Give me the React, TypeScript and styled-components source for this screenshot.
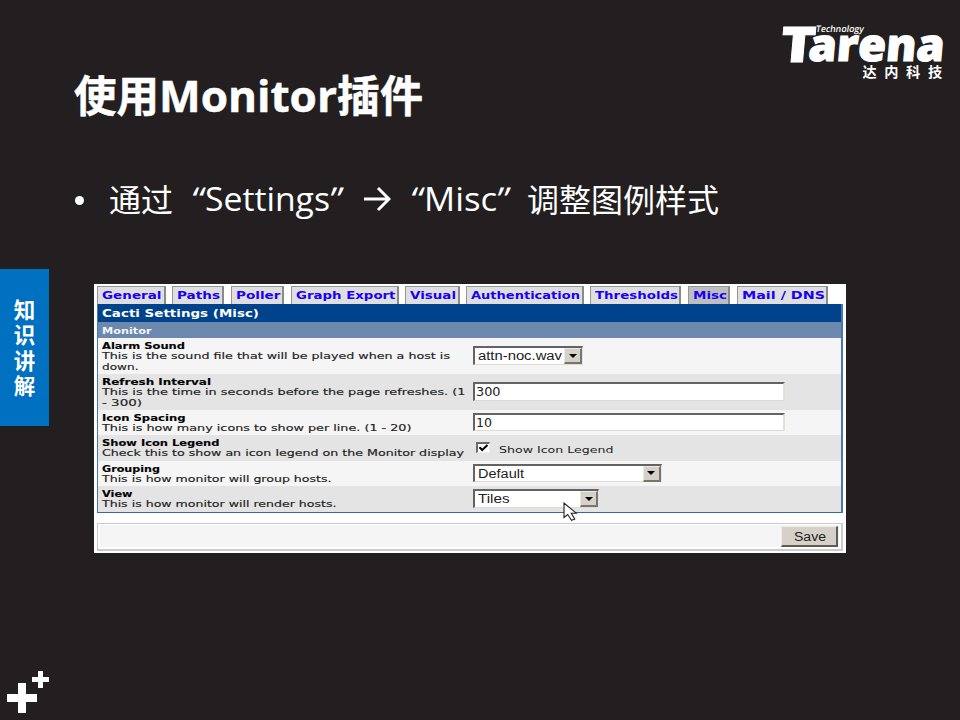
import React, { useLayoutEffect, useRef, useState } from "react";
import styled, { createGlobalStyle } from "styled-components";

const GlobalStyle = createGlobalStyle`
  body { margin: 0; background: #231f20; overflow: hidden; }
  *, *::before, *::after { box-sizing: border-box; }
`;

/* Text stretched horizontally to a given width */
const FitBox = styled.span<{ $w: number }>`
  display: block;
  flex: none;
  width: ${(p) => p.$w}px;
  white-space: pre;
`;
const FitInner = styled.span`
  display: inline-block;
  vertical-align: top;
  transform-origin: 0 0;
`;
function Fit({ w, children, className }: { w: number; children: React.ReactNode; className?: string }) {
  const ref = useRef<HTMLSpanElement>(null);
  const [scale, setScale] = useState(1);
  useLayoutEffect(() => {
    const el = ref.current;
    if (!el) return;
    const natural = parseFloat(getComputedStyle(el).width);
    el.style.transform = `scaleX(${w / natural})`;
    setScale(w / natural);
  }, [w, children]);
  return (
    <FitBox $w={w} className={className}>
      <FitInner ref={ref} style={{ transform: `scaleX(${scale})` }}>
        {children}
      </FitInner>
    </FitBox>
  );
}

const Slide = styled.div`
  display: grid;
  grid-template-columns: 49px 1fr;
  width: 960px;
  height: 720px;
  overflow: hidden;
  background: #231f20;
  color: #fff;
`;
const Rail = styled.aside`
  display: flex;
  flex-direction: column;
  justify-content: space-between;
  padding-top: 269px;
`;
const SideTab = styled.div`
  width: 49px;
  height: 157px;
  padding-top: 26.5px;
  background: #0070c0;
  font: 700 21.5px/25.5px "Noto Sans CJK SC", sans-serif;
  text-align: center;
  span { display: block; }
`;
const Plus = styled.svg`
  display: block;
  width: 49px;
  height: 60px;
`;
const Main = styled.main`
  display: flex;
  flex-direction: column;
`;
const Header = styled.header`
  display: flex;
  justify-content: space-between;
  height: 150px;
  padding: 0 16px 0 25px;
`;
const Title = styled.h1`
  display: flex;
  margin: 66px 0 0;
  height: 60px;
  font: 700 43.5px/60px "Open Sans", "Noto Sans CJK SC", sans-serif;
  -webkit-text-stroke: 0.5px #fff;
`;
const Logo = styled.div`
  position: relative;
  width: 163px;
  height: 84px;
`;
const LogoT = styled(Fit)`
  position: absolute;
  left: 0px;
  top: 24.5px;
  font: 800 49px/36px "Open Sans", sans-serif;
  transform: skewX(-5deg);
  -webkit-text-stroke: 0.8px #fff;
`;
const LogoRest = styled(Fit)`
  position: absolute;
  left: 28px;
  top: 31px;
  font: 800 45px/26px "Open Sans", sans-serif;
  transform: skewX(-5deg);
  -webkit-text-stroke: 1.2px #fff;
`;
const LogoTag = styled(Fit)`
  position: absolute;
  left: 35px;
  top: 24px;
  font: 600 9px/10px "Open Sans", sans-serif;
  transform: skewX(-9deg);
`;
const LogoName = styled.div`
  position: absolute;
  left: 81.5px;
  top: 63.5px;
  display: flex;
  gap: 7.6px;
  font: 700 14.2px/15px "Noto Sans CJK SC", sans-serif;
`;
const Bullet = styled.div`
  display: flex;
  align-items: center;
  height: 60px;
  margin-top: 19px;
  padding-left: 26px;
  font: 400 33px/60px "Open Sans", "Noto Sans CJK SC", sans-serif;
`;
const Dot = styled.i`
  width: 9px;
  height: 9px;
  margin: 2px 25px 0 0;
  border-radius: 50%;
  background: #fff;
`;
const Han = styled(Fit)`
  height: 60px;
  margin-top: -2px;
  font: 400 32px/60px "Noto Sans CJK SC", sans-serif;
`;
const Quote = styled(Fit)`
  transform: skewX(-6deg);
`;
const Gap = styled.i<{ $w: number }>`
  flex: none;
  width: ${(p) => p.$w}px;
`;
const Arrow = styled.svg`
  flex: none;
  width: 27px;
  height: 26px;
`;

const Panel = styled.section`
  width: 752px;
  height: 269px;
  margin: 55px 0 0 45px;
  padding: 2px 3px;
  background: #fff;
  color: #222;
  font: 400 9px/10.3px "DejaVu Sans", sans-serif;
`;
const Tabs = styled.nav`
  display: flex;
  height: 18px;
  gap: 6.6px;
`;
const Tab = styled.div<{ $active?: boolean; $w: number }>`
  flex: none;
  width: ${(p) => p.$w}px;
  height: 18px;
  padding-left: 4px;
  border: 1px solid #8e8e8e;
  border-width: 1px 2px 0 1px;
  border-color: #969696 #8a8a8a #8a8a8a #969696;
  background: ${(p) => (p.$active ? "#bebebe" : "#dfdfdf")};
  color: #1a00f5;
  font: 700 11px/17px "DejaVu Sans", sans-serif;
`;
const Table = styled.div`
  height: 209px;
  border: 1px solid #3468a8;
  border-width: 0 2px 1px 1px;
  border-left-color: #4778b2;
  border-right-color: #4778b2;
`;
const Caption = styled.div`
  height: 18px;
  padding-left: 4px;
  background: #00438c;
  color: #fff;
  font: 700 11px/20px "DejaVu Sans", sans-serif;
`;
const SubCaption = styled.div`
  height: 16px;
  padding: 1px 0 0 4px;
  background: #6d88ad;
  color: #f4f6f9;
  font: 700 9px/16px "DejaVu Sans", sans-serif;
`;
const Row = styled.div<{ $h: number; $alt?: boolean }>`
  display: grid;
  grid-template-columns: 375px 1fr;
  height: ${(p) => p.$h}px;
  background: ${(p) => (p.$alt ? "#e4e4e4" : "#f5f5f5")};
`;
const Label = styled.div`
  padding: 3px 0 0 4px;
  -webkit-text-stroke: 0.15px #222;
`;
const Name = styled(Fit)`
  color: #000;
  font-weight: 700;
`;
const Control = styled.div`
  display: flex;
  align-items: center;
  padding-bottom: 1px;
`;
const Field = styled.div<{ $w: number }>`
  display: flex;
  justify-content: space-between;
  width: ${(p) => p.$w}px;
  height: 18.5px;
  padding-left: 2px;
  border: 2px solid #636363;
  border-right-color: #e2e0d8;
  border-bottom: 1px solid #dddbd2;
  background: #fff;
  color: #222;
  font: 400 12.5px/17px "Liberation Sans", sans-serif;
`;
const DigitField = styled(Field)`
  padding-left: 1px;
  font: 400 12px/16.5px "DejaVu Sans", sans-serif;
`;
const Pick = styled(Field)`
  padding-left: 3px;
  border-right: 1px solid #e6e4de;
`;
const Drop = styled.i`
  display: flex;
  align-items: center;
  justify-content: center;
  width: 18px;
  height: 16px;
  background: #d5d1c9;
  border: 1px solid #ece9e2;
  border-right: 2px solid #77756f;
  border-bottom: 2px solid #77756f;
  svg { width: 8px; height: 4px; }
`;
const Check = styled.i`
  width: 14px;
  height: 11.5px;
  margin: 0 9px 0 3px;
  border: 2px solid #696969;
  border-width: 2px 1px 1px 2px;
  border-right-color: #eee;
  border-bottom-color: #eee;
  background: #fff;
  svg { display: block; width: 11px; height: 8px; }
`;
const CheckLabel = styled(Fit)`
  padding-top: 5px;
`;
const Footer = styled.div`
  display: flex;
  justify-content: flex-end;
  height: 28px;
  margin-top: 10px;
  padding: 2px 3px 0 0;
  border: 1px solid #cbcbcb;
  border-width: 1px 2px 2px 1.5px;
  background: #f5f5f5;
  box-shadow: inset 2px 1px 0 #fff, inset -2px -2px 0 #fff;
`;
const Save = styled.button`
  width: 57px;
  height: 21px;
  padding: 1px 0 0 12px;
  border: 1px solid #eeece6;
  border-right: 2px solid #5d5b57;
  border-bottom: 2px solid #5d5b57;
  background: #d5d1c9;
  color: #222;
  font: 400 12.5px/18px "Liberation Sans", sans-serif;
  text-align: left;
`;
const CursorAnchor = styled.div`
  position: relative;
`;
const Cursor = styled.svg`
  position: absolute;
  left: 466px;
  top: -11px;
  width: 15px;
  height: 20px;
`;

const tabs: [string, number, number][] = [
  ["General", 68.5, 59.5], ["Paths", 52, 43], ["Poller", 53.3, 44.5], ["Graph Export", 108, 99.5],
  ["Visual", 54.5, 46], ["Authentication", 117.3, 109], ["Thresholds", 91.3, 83], ["Misc", 42.3, 34], ["Mail / DNS", 91, 83],
];

const DropButton = () => (
  <Drop><svg viewBox="0 0 8 4"><path d="M0 0H8L4 4Z" fill="#000" /></svg></Drop>
);

type Setting = { h: number; name: [string, number]; lines: [string, number][]; control: React.ReactNode };
const settings: Setting[] = [
  {
    h: 36, name: ["Alarm Sound", 83],
    lines: [["This is the sound file that will be played when a host is", 348], ["down.", 36.5]],
    control: <Pick $w={110}><Fit w={84}>attn-noc.wav</Fit><DropButton /></Pick>,
  },
  {
    h: 36, name: ["Refresh Interval", 109],
    lines: [["This is the time in seconds before the page refreshes. (1", 363.5], ["- 300)", 40]],
    control: <DigitField $w={312}><Fit w={24.5}>300</Fit></DigitField>,
  },
  {
    h: 25, name: ["Icon Spacing", 83.5],
    lines: [["This is how many icons to show per line. (1 - 20)", 309.5]],
    control: <DigitField $w={312}><Fit w={16}>10</Fit></DigitField>,
  },
  {
    h: 26, name: ["Show Icon Legend", 117.5],
    lines: [["Check this to show an icon legend on the Monitor display", 362]],
    control: (
      <>
        <Check><svg viewBox="0 0 11 8"><path d="M1.5 3.2L4.2 6L9.5 1" fill="none" stroke="#000" strokeWidth="2" /></svg></Check>
        <CheckLabel w={114.5}>Show Icon Legend</CheckLabel>
      </>
    ),
  },
  {
    h: 25, name: ["Grouping", 58],
    lines: [["This is how monitor will group hosts.", 229.5]],
    control: <Pick $w={188.5}><Fit w={46}>Default</Fit><DropButton /></Pick>,
  },
  {
    h: 26, name: ["View", 30.5],
    lines: [["This is how monitor will render hosts.", 234.5]],
    control: <Pick $w={126}><Fit w={31.5}>Tiles</Fit><DropButton /></Pick>,
  },
];

export default function App() {
  return (
    <>
      <GlobalStyle />
      <Slide>
        <Rail>
          <SideTab>{[..."知识讲解"].map((c) => <span key={c}>{c}</span>)}</SideTab>
          <Plus viewBox="0 0 49 60">
            <path d="M18 23h8v11h11v8H26v11h-8V42H7v-8h11Z" fill="#fff" />
            <path d="M38 11h5v6h6v5h-6v6h-5v-6h-6v-5h6Z" fill="#fff" />
          </Plus>
        </Rail>
        <Main>
          <Header>
            <Title><Fit w={85}>使用</Fit><Fit w={178}>Monitor</Fit><Fit w={86}>插件</Fit></Title>
            <Logo>
              <LogoT w={35}>T</LogoT>
              <LogoRest w={136}>arena</LogoRest>
              <LogoTag w={48}>Technology</LogoTag>
              <LogoName>{[..."达内科技"].map((c) => <span key={c}>{c}</span>)}</LogoName>
            </Logo>
          </Header>
          <Bullet>
            <Dot />
            <Han w={64}>通过</Han>
            <Gap $w={19} />
            <Quote w={13}>“</Quote>
            <Fit w={125}>Settings</Fit>
            <Quote w={13}>”</Quote>
            <Gap $w={20.5} />
            <Arrow viewBox="0 0 27 26"><path d="M0 13H25M14 2L25 13L14 24" fill="none" stroke="#fff" strokeWidth="3" /></Arrow>
            <Gap $w={20} />
            <Quote w={13}>“</Quote>
            <Fit w={73}>Misc</Fit>
            <Quote w={13}>”</Quote>
            <Gap $w={17} />
            <Han w={192}>调整图例样式</Han>
          </Bullet>
          <Panel>
            <Tabs>
              {tabs.map(([t, w, tw]) => <Tab key={t} $w={w} $active={t === "Misc"}><Fit w={tw}>{t}</Fit></Tab>)}
            </Tabs>
            <Table>
              <Caption><Fit w={157}>Cacti Settings (Misc)</Fit></Caption>
              <SubCaption><Fit w={49.5}>Monitor</Fit></SubCaption>
              {settings.map((s, i) => (
                <Row key={s.name[0]} $h={s.h} $alt={i % 2 === 1}>
                  <Label>
                    <Name w={s.name[1]}>{s.name[0]}</Name>
                    {s.lines.map(([l, w]) => <Fit key={l} w={w}>{l}</Fit>)}
                  </Label>
                  <Control>{s.control}</Control>
                </Row>
              ))}
            </Table>
            <CursorAnchor>
              <Cursor viewBox="0 0 15 20">
                <path d="M1 1V15.5L4.7 12.5L8.5 18.3L11.8 17L8.2 11.2H13.2Z" fill="#fff" stroke="#222" strokeWidth="1.1" />
              </Cursor>
            </CursorAnchor>
            <Footer><Save><Fit w={32}>Save</Fit></Save></Footer>
          </Panel>
        </Main>
      </Slide>
    </>
  );
}
